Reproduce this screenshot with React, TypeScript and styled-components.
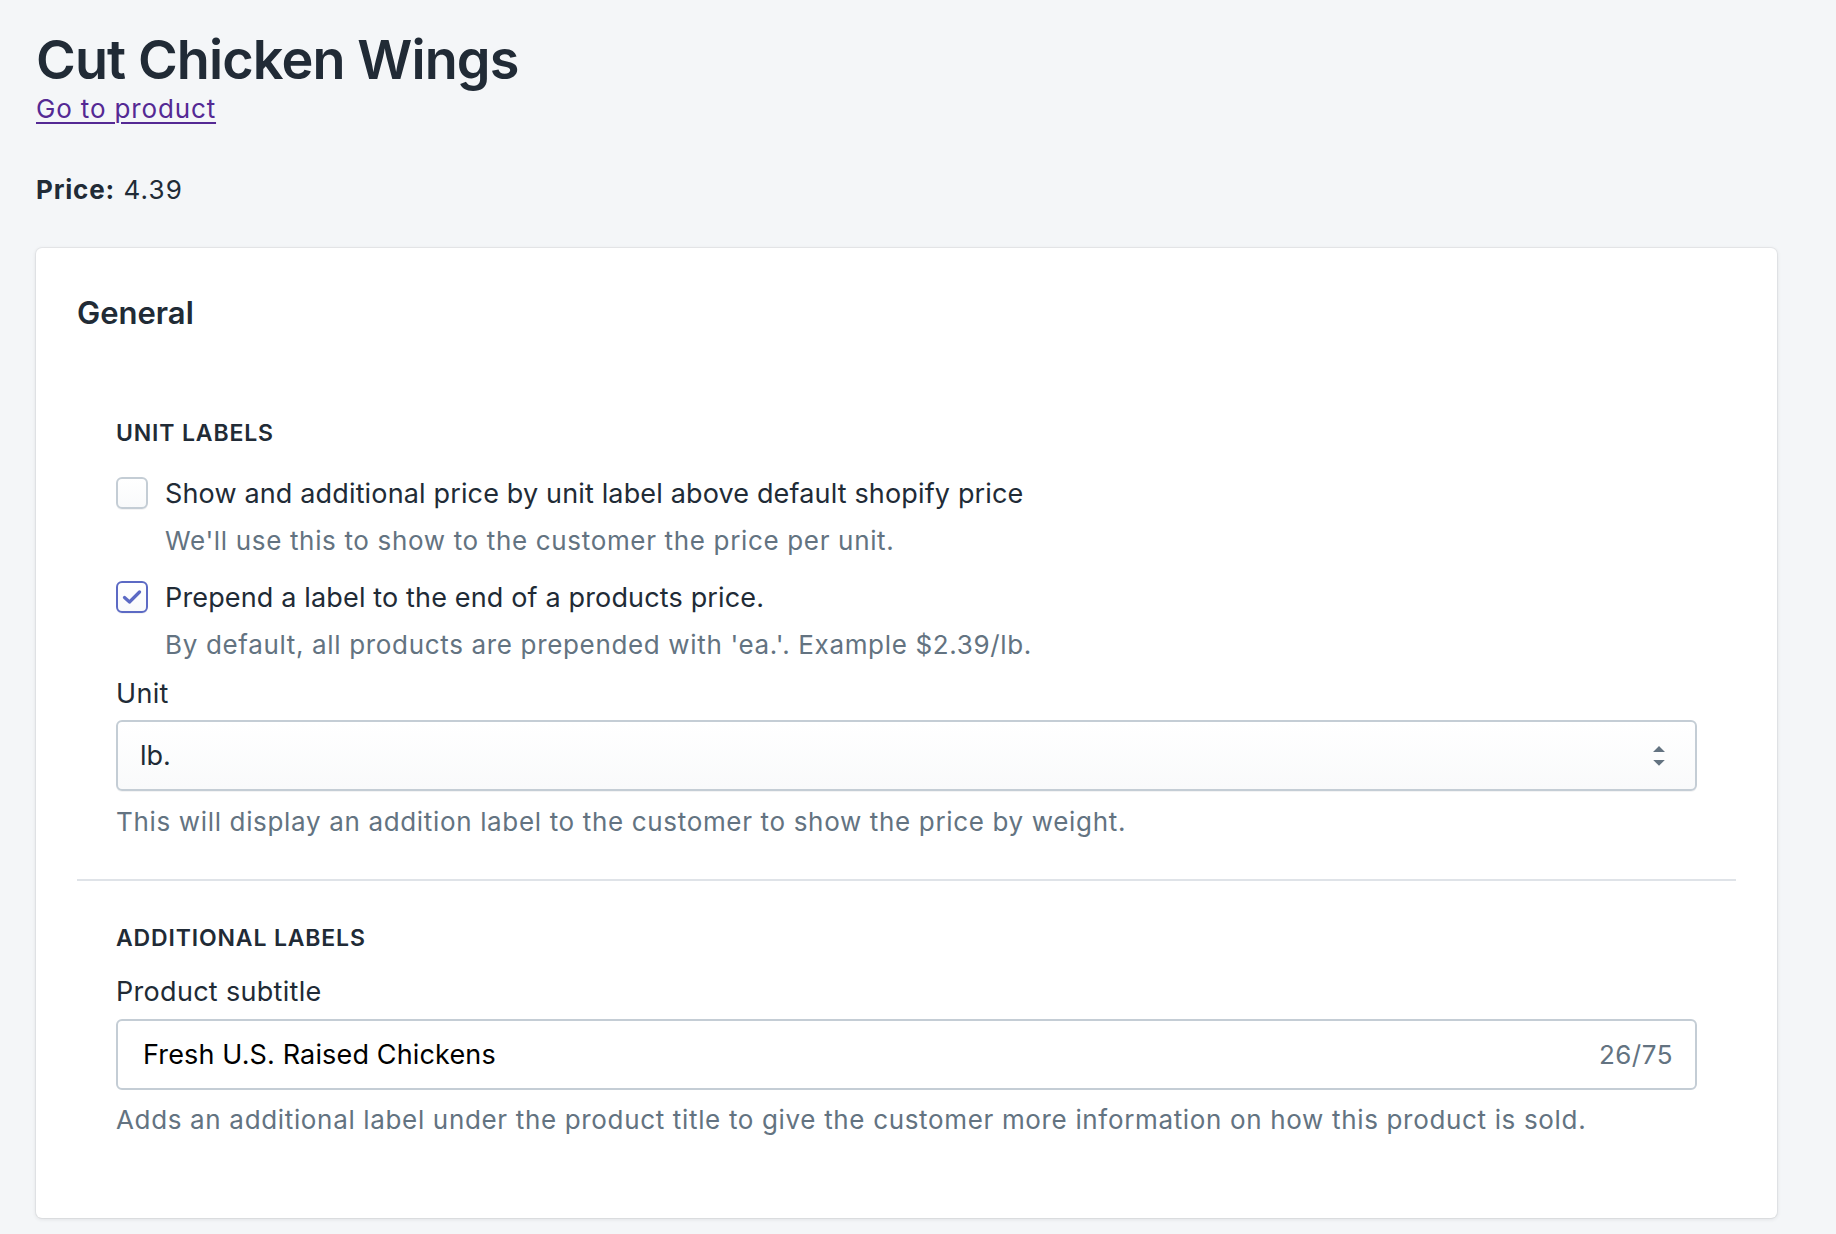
import React, { useState } from "react";
import styled, { createGlobalStyle } from "styled-components";

const GlobalStyle = createGlobalStyle`
  body {
    margin: 0;
    background: #f4f6f8;
    font-family: Inter, "Noto Sans", "Liberation Sans", sans-serif;
    color: #212b36;
  }
`;

const Page = styled.div`
  padding: 27px 0 16px 36px;
  width: 1741px;
`;

const Title = styled.h1`
  margin: 0;
  font-size: 54px;
  line-height: 66px;
  font-weight: 600;
  letter-spacing: -0.9px;
`;

const ProductLink = styled.a`
  display: inline-block;
  font-size: 26px;
  line-height: 32px;
  letter-spacing: 0.85px;
  color: #542994;
  text-decoration: underline;
  text-underline-offset: 4px;
  text-decoration-thickness: 2px;
`;

const PriceLine = styled.p`
  margin: 49px 0 0;
  font-size: 26px;
  line-height: 32px;
  letter-spacing: 1.2px;
  strong {
    font-weight: 700;
    letter-spacing: 0.8px;
  }
`;

const Card = styled.div`
  margin-top: 42px;
  background: #fff;
  border-radius: 6px;
  box-shadow: 0 0 0 1px rgba(63, 63, 68, 0.06), 0 1px 4px 0 rgba(63, 63, 68, 0.14);
  padding: 45px 41px 78px;
`;

const CardTitle = styled.h2`
  margin: 0;
  font-size: 31px;
  line-height: 40px;
  font-weight: 600;
`;

const Section = styled.section<{ $top: number }>`
  padding: ${(p) => p.$top}px 39px 0;
`;

const Divider = styled.hr`
  margin: 37px 0 0;
  border: none;
  border-top: 2px solid #dfe3e8;
`;

const Subheading = styled.h3`
  margin: 0;
  font-size: 23px;
  line-height: 32px;
  font-weight: 600;
  letter-spacing: 0.85px;
  text-transform: uppercase;
`;

const CheckRow = styled.label<{ $gap: number }>`
  display: flex;
  align-items: flex-start;
  gap: 17px;
  margin-top: ${(p) => p.$gap}px;
  font-size: 27px;
  line-height: 40px;
  letter-spacing: 0.15px;
  cursor: pointer;
`;

const Box = styled.span<{ $checked: boolean }>`
  flex: none;
  width: 32px;
  height: 32px;
  margin-top: 3px;
  box-sizing: border-box;
  border-radius: 6px;
  border: 2px solid ${(p) => (p.$checked ? "#5c6ac4" : "#c4cdd5")};
  background: linear-gradient(180deg, #ffffff, #f9fafb);
  box-shadow: 0 1px 0 0 rgba(22, 29, 37, 0.05);
  display: flex;
  align-items: center;
  justify-content: center;
`;

const Help = styled.p<{ $indent?: boolean; $gap: number }>`
  margin: ${(p) => p.$gap}px 0 0 ${(p) => (p.$indent ? 49 : 0)}px;
  font-size: 26px;
  line-height: 40px;
  letter-spacing: 0.66px;
  color: #637381;
`;

const FieldLabel = styled.div<{ $gap: number }>`
  margin-top: ${(p) => p.$gap}px;
  font-size: 27px;
  line-height: 40px;
  letter-spacing: 0.3px;
`;

const SelectBox = styled.div`
  margin-top: 6px;
  height: 71px;
  box-sizing: border-box;
  border: 2px solid #c4cdd5;
  border-radius: 6px;
  background: linear-gradient(180deg, #ffffff, #f9fafb);
  box-shadow: 0 1px 0 0 rgba(22, 29, 37, 0.05);
  display: flex;
  align-items: center;
  padding: 0 16px 0 22px;
  font-size: 27px;
`;

const SelectValue = styled.span`
  flex: 1;
`;

const TextBox = styled.div`
  margin-top: 7px;
  height: 71px;
  box-sizing: border-box;
  border: 2px solid #c4cdd5;
  border-radius: 6px;
  background: #fff;
  display: flex;
  align-items: center;
  padding: 0 22px 0 25px;
  font-size: 27px;
  letter-spacing: 0.15px;
`;

const TextValue = styled.span`
  flex: 1;
  color: #000;
`;

const Counter = styled.span`
  color: #637381;
  font-size: 26px;
  letter-spacing: 0.5px;
`;

function Check({ checked }: { checked: boolean }) {
  return (
    <Box $checked={checked}>
      {checked && (
        <svg width="20" height="14" viewBox="0 0 20 14">
          <path
            d="M2.5 7.5l5 4.5 10-10"
            fill="none"
            stroke="#5c6ac4"
            strokeWidth="3.2"
            strokeLinecap="round"
            strokeLinejoin="round"
          />
        </svg>
      )}
    </Box>
  );
}

function App() {
  const [showUnit, setShowUnit] = useState(false);
  const [prepend, setPrepend] = useState(true);

  return (
    <Page>
      <GlobalStyle />
      <Title>Cut Chicken Wings</Title>
      <ProductLink href="#">Go to product</ProductLink>
      <PriceLine>
        <strong>Price:</strong> 4.39
      </PriceLine>

      <Card>
        <CardTitle>General</CardTitle>

        <Section $top={84}>
          <Subheading>Unit labels</Subheading>
          <CheckRow $gap={25} onClick={() => setShowUnit(!showUnit)}>
            <Check checked={showUnit} />
            Show and additional price by unit label above default shopify price
          </CheckRow>
          <Help $indent $gap={7}>
            We'll use this to show to the customer the price per unit.
          </Help>
          <CheckRow $gap={17} onClick={() => setPrepend(!prepend)}>
            <Check checked={prepend} />
            Prepend a label to the end of a products price.
          </CheckRow>
          <Help $indent $gap={7}>
            By default, all products are prepended with 'ea.'. Example $2.39/lb.
          </Help>
          <FieldLabel $gap={9}>Unit</FieldLabel>
          <SelectBox>
            <SelectValue>lb.</SelectValue>
            <svg width="40" height="40" viewBox="0 0 20 20">
              <path d="M13 8l-3-3-3 3h6zm-.1 4L10 14.9 7.1 12h5.8z" fill="#637381" />
            </svg>
          </SelectBox>
          <Help $gap={11}>
            This will display an addition label to the customer to show the price by weight.
          </Help>
        </Section>

        <Divider />

        <Section $top={41}>
          <Subheading>Additional labels</Subheading>
          <FieldLabel $gap={18}>Product subtitle</FieldLabel>
          <TextBox>
            <TextValue>Fresh U.S. Raised Chickens</TextValue>
            <Counter>26/75</Counter>
          </TextBox>
          <Help $gap={10}>
            Adds an additional label under the product title to give the customer more information on how this product is sold.
          </Help>
        </Section>
      </Card>
    </Page>
  );
}

export default App;
